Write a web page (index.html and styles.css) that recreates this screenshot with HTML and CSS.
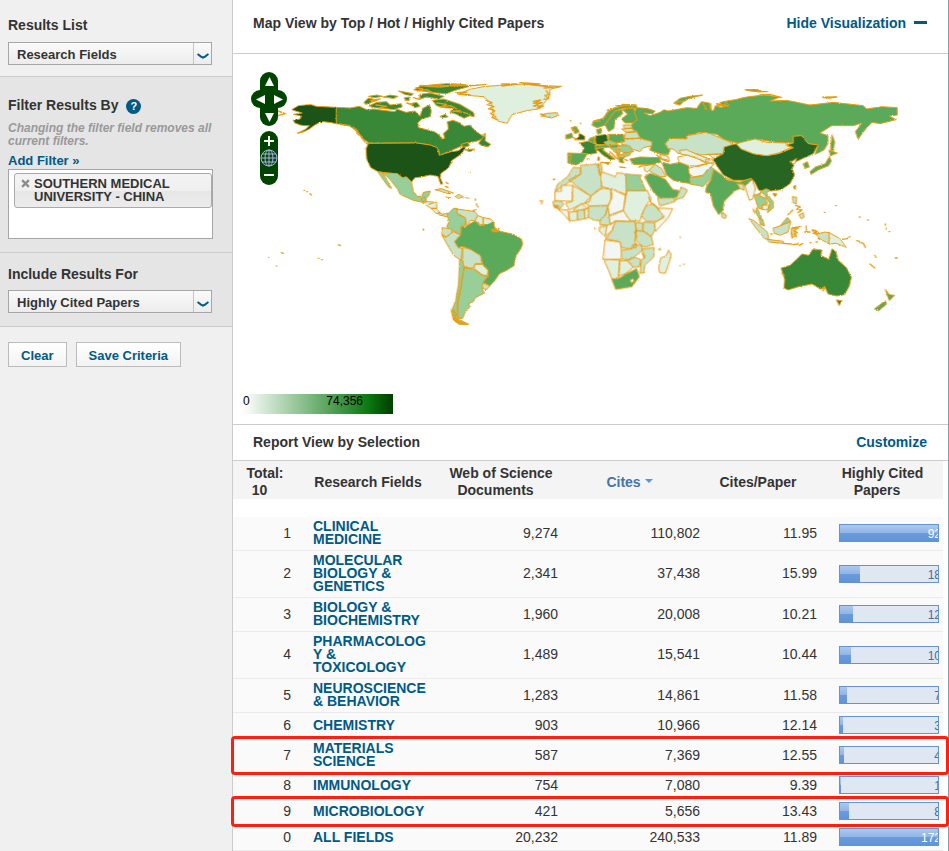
FILE: index.html
```html
<!DOCTYPE html>
<html lang="en">
<head>
<meta charset="utf-8">
<title>Research Fields</title>
<link rel="stylesheet" href="styles.css">
</head>
<body>
<div class="layout">
<aside class="sidebar">
  <section class="panel panel-results">
    <label class="panel-title" for="results-list">Results List</label>
    <div class="select-wrap">
      <select id="results-list"><option>Research Fields</option></select>
      <span class="select-arrow"><svg viewBox="0 0 12 6"><path d="M0.5 1 L4 3.6 L6 4.6 L8 3.6 L11.5 1"/></svg></span>
    </div>
  </section>
  <section class="panel panel-filter">
    <h2 class="panel-title with-help">Filter Results By <button class="help" type="button" aria-label="Help">?</button></h2>
    <p class="note">Changing the filter field removes all current filters.</p>
    <a class="add-filter" href="#">Add Filter »</a>
    <div class="filter-box">
      <div class="chip">
        <button class="chip-remove" type="button" aria-label="Remove"><svg viewBox="0 0 8 8"><path d="M1 1 L7 7 M7 1 L1 7"/></svg></button>
        <span>SOUTHERN MEDICAL UNIVERSITY - CHINA</span>
      </div>
    </div>
  </section>
  <section class="panel panel-include">
    <label class="panel-title" for="include-for">Include Results For</label>
    <div class="select-wrap">
      <select id="include-for"><option>Highly Cited Papers</option></select>
      <span class="select-arrow"><svg viewBox="0 0 12 6"><path d="M0.5 1 L4 3.6 L6 4.6 L8 3.6 L11.5 1"/></svg></span>
    </div>
  </section>
  <div class="actions">
    <button class="btn" type="button">Clear</button>
    <button class="btn" type="button">Save Criteria</button>
  </div>
</aside>

<main class="main">
  <header class="bar-head map-head">
    <h2>Map View by Top / Hot / Highly Cited Papers</h2>
    <a class="hide-link" href="#">Hide Visualization<span class="dash"></span></a>
  </header>
  <section class="map">
    <svg class="world" viewBox="0 0 2145 1110" aria-hidden="true">
      <defs>
        <filter id="coast" x="0" y="0" width="100%" height="100%">
          <feTurbulence type="fractalNoise" baseFrequency="0.22" numOctaves="2" seed="4" result="n"/>
          <feDisplacementMap in="SourceGraphic" in2="n" scale="6" xChannelSelector="R" yChannelSelector="G"/>
        </filter>
      </defs>
      <g filter="url(#coast)">
      <g transform="translate(21 3)">
        <path class="c6" d="M157,163 L175,152 195,150 214,149 228,154 290,157 290,207 275,203 250,200 237,203 220,213 208,222 190,231 172,235 198,222 208,212 192,212 180,210 163,203 160,195 180,192 184,183 160,178 186,174 160,166Z"/>
        <path class="c4" d="M290,157 L330,159 358,154 380,164 400,162 430,166 465,170 470,162 498,172 525,168 540,184 548,160 568,150 574,168 570,185 545,192 533,204 536,218 560,224 583,230 598,240 606,252 614,250 610,236 625,222 622,200 640,196 660,204 672,214 690,210 706,228 724,240 736,248 712,258 682,264 660,275 640,284 600,301 594,280 570,270 530,264 386,264 370,252 350,228 330,214 308,208 290,206Z"/>
        <path class="c4" d="M372,142 L384,130 400,132 396,142 378,148Z M388,152 L410,142 440,140 450,150 484,146 486,156 462,164 430,160 400,158Z M386,124 L410,120 428,124 404,128Z M430,126 L450,120 474,124 462,130Z M476,108 L498,112 520,116 514,122 494,118Z M494,128 L510,126 508,136 496,136Z M522,104 L540,94 572,90 620,86 670,88 690,94 660,102 640,108 620,116 590,114 560,110Z M540,118 L570,114 612,124 596,132 560,126 540,132Z M578,136 L610,132 636,140 660,148 680,160 700,172 704,186 690,182 672,190 650,178 630,172 640,160 612,158 590,152Z M512,146 L530,142 540,154 524,158Z M600,184 L616,178 624,186 608,188Z M716,264 L736,238 736,258 752,268 744,276 722,270Z M664,268 L684,262 688,272 670,278Z M676,284 L704,282 690,290Z"/>
        <path class="coast" d="M528,98 L548,102 532,108 560,104 576,112 M560,94 L600,96 640,92 700,92 740,88 M392,136 L420,132 400,140 M408,150 L440,154 420,158 M590,144 L620,148 600,156 632,152 650,162 M640,168 L670,172 690,178 M500,144 L518,150 M520,128 L540,134 M340,216 L356,240 348,222 366,250 376,262 390,272 M300,208 L330,212 M636,302 L626,318 636,322 624,330 M174,234 L190,228 M638,170 L660,166 M728,240 L736,236 M114,168 L136,176 114,182"/>
        <path class="c6" d="M386,265 L530,264 570,270 592,278 598,301 632,290 655,287 672,274 676,280 660,300 636,316 626,338 602,356 601,370 608,386 602,388 594,364 570,360 545,366 525,368 514,382 500,366 486,368 472,356 440,354 414,350 392,338 380,312 378,282Z"/>
        <path class="c2" d="M428,353 L440,354 472,356 486,368 500,366 514,380 520,410 532,424 545,424 550,412 571,408 566,422 556,432 548,442 520,436 480,418 474,404 452,376 440,364Z M414,350 L428,353 440,375 455,400 446,396 430,375Z M544,430 L556,426 560,440 548,442Z"/>
        <path class="c0" d="M548,442 L566,440 590,442 590,460 574,460Z M574,460 L590,460 600,474 590,476Z M566,448 L580,444"/>
        <path class="c1" d="M596,472 L608,478 622,474 622,486 608,482 598,480Z M586,404 L605,401 640,414 622,416 600,408Z M646,424 L656,418 670,426 656,430Z M618,426 L632,428 M676,428 L688,430"/>
        <path class="c2" d="M622,478 L640,460 652,460 652,478 676,488 676,512 664,514 662,540 640,528 620,516 626,500Z"/>
        <path class="c1" d="M650,462 L680,466 705,470 714,482 706,498 692,496 680,514 676,488 654,476Z M608,518 L634,522 636,532 618,546 606,538Z M606,540 L618,548 640,530 662,540 644,560 655,578 668,580 668,610 662,616 640,600 620,566Z M668,578 L690,580 722,602 726,626 706,626 698,640 672,636 664,612Z M728,684 L750,692 740,704 726,700Z"/>
        <path class="c0" d="M714,482 L730,488 730,510 720,508 706,498Z M730,488 L752,492 764,504 745,508 730,510Z"/>
        <path class="c3" d="M664,514 L676,516 692,505 706,498 720,512 745,508 760,500 766,524 785,530 820,538 844,552 848,566 842,582 828,602 822,632 800,646 778,656 765,676 750,692 728,682 745,662 742,642 728,628 722,602 695,585 668,574 655,578 644,560 662,540Z"/>
        <path class="coast" d="M754,524 L776,520 774,530 758,530Z M760,526 L774,526"/>
        <path class="c0" d="M706,628 L726,628 744,646 742,662 728,660 704,642Z"/>
        <path class="c2" d="M672,638 L700,642 728,662 742,664 728,684 726,702 734,714 706,728 700,740 686,746 690,756 676,770 668,790 654,790 652,740 662,700 668,660Z M660,614 L668,616 672,640 664,690 654,740 652,790 686,808 660,810 640,795 634,768 646,740 655,690Z"/>
        <path class="coast" d="M640,766 L650,780 640,784 656,798 648,800 676,808 M636,770 L644,796 670,804 M686,240"/>
        <path class="dots" d="M192,406h2 M200,410h2 M210,416l4,4 M550,522v4 M296,569l5,3 M124,593l6,2 M85,607h1 M109,633h1 M235,610h2 M245,614h2 M688,352h2 M618,382l6,4 M616,394l8,4 M706,432v4 M710,446v6 M714,454v2 M700,466l8,-2"/>
      </g>
      <g transform="translate(561 48)">
        <path class="c0" d="M115,72 L150,58 190,50 240,46 310,42 360,46 425,49 390,58 388,80 372,100 360,116 320,122 276,134 262,160 236,154 222,136 214,100 190,80 140,76Z"/>
        <path class="coast" d="M110,68 L140,66 118,72 150,74 M246,48 L290,42 244,42 M300,38 L360,42 310,42 M330,44 L400,52 372,54 420,50 M378,62 L388,74 374,76 386,86 372,88 M340,94 L362,90 340,100 366,98 340,108 370,108 352,114 M198,92 L216,98 202,104 222,110 206,116 224,122 212,130 226,140 216,142 232,150 M0,46 L20,48 160,46 M90,42 L150,48"/>
        <path class="c1" d="M366,134 L380,130 410,128 416,136 395,144 374,140Z"/>
        <path class="coast" d="M362,132 L376,136 364,138"/>
      </g>
      <g transform="translate(921 63)">
        <path class="c3" d="M156,150 L160,138 190,130 204,110 225,98 250,92 290,92 290,100 250,100 225,108 210,128 196,150 172,158Z M210,128 L225,108 245,104 248,116 225,134 222,160 206,170 195,150Z M248,104 L280,96 292,134 282,144 255,144 244,132 262,118Z"/>
        <path class="coast" d="M160,140 L180,138 M188,132 L202,112 212,104 M200,106 L240,94 230,92 270,92 M246,88 L288,90"/>
        <path class="c3" d="M288,98 L320,100 345,108 338,116 312,114 330,122 360,112 372,104 384,108 440,98 470,100 484,80 508,84 512,104 520,108 526,92 548,98 540,82 585,74 620,66 670,60 690,62 720,66 690,78 740,76 810,90 880,82 970,92 980,102 1025,95 1072,98 1072,120 1048,123 1068,134 1020,146 996,142 980,158 954,192 946,170 966,144 940,152 875,152 840,174 864,182 864,205 852,225 825,238 834,210 805,206 785,182 760,184 760,204 710,202 645,192 600,206 555,195 530,178 480,172 442,182 440,192 388,192 376,206 390,226 384,240 360,236 330,226 335,200 300,190 290,170 275,160 275,148 292,134 284,116Z"/>
        <path class="c3" d="M402,84 L420,70 450,64 488,60 450,70 430,80 420,90Z M620,46 L650,44 668,50 646,50Z M848,66 L888,66 868,70Z M876,180 L884,200 880,228 872,226Z"/>
        <path class="coast" d="M404,82 L430,78 M616,44 L654,44 M652,50 L682,50 M530,90 L546,92 532,86 564,94 M560,80 L550,94 566,90 M850,68 L890,66 M660,60 L690,58 724,68 M488,84 L500,104 M512,86 L514,104"/>
        <path class="c1" d="M376,206 L388,190 440,192 442,182 498,172 530,184 558,196 580,206 560,222 550,236 510,238 480,240 440,228 415,236 400,222 386,222Z M252,192 L280,190 300,190 335,200 336,212 310,218 300,230 276,222 268,212 245,208Z M258,172 L290,170 300,188 280,192 254,190Z M250,150 L275,150 276,160 254,160Z M246,162 L276,160 284,172 260,172Z M320,272 L345,268 364,280 378,304 360,306 332,290Z"/>
        <path class="c3" d="M206,178 L250,178 254,200 230,204 206,196Z M84,234 L142,236 128,260 108,270 84,264Z M270,252 L300,246 360,248 362,262 330,270 280,268Z M366,262 L390,268 420,262 446,274 452,304 456,326 425,322 400,316 380,300Z M94,158 L108,154 118,170 106,176Z M78,180 L96,174 98,188 78,192Z M170,164 L184,160 184,174 174,178Z M234,250 L256,244 248,254 252,264 240,262Z"/>
        <path class="c5" d="M168,182 L200,178 204,196 196,210 170,208 164,196Z M104,194 L116,186 118,174 134,184 134,194Z"/>
        <path class="c4" d="M118,204 L146,198 168,208 170,234 150,238 124,234 132,220Z M166,222 L190,216 192,228 216,244 226,252 210,254 188,240 176,228Z M196,264 L210,262 206,268Z M174,246 L178,246 178,256 174,256Z"/>
        <path class="c3" d="M150,190 L166,184 166,206 146,198Z M166,212 L216,208 212,216 168,220Z M206,210 L226,206 240,214 216,222Z"/>
        <path class="c2" d="M192,202 L206,196 232,206 226,210 200,210Z M240,212 L268,212 280,230 254,234 238,226Z M212,218 L238,220 240,236 226,232Z M250,234 L274,232 268,242 252,244Z M230,236 L250,240 236,252Z M450,308 L490,302 510,272 524,285 514,310 490,334 452,328Z"/>
        <path class="coast" d="M84,240 L92,240 90,264 M226,224 L240,250 M210,230 L230,250 M160,204 L166,186 150,190 M182,262 L210,264 M240,276 L256,278 M296,276 L308,272 M254,254 L262,256 M98,162 L106,168 M100,188 L110,192 M188,224 L220,250 M350,240 L368,254 386,260 M362,242 L384,250"/>
        <path class="c0" d="M360,238 L384,244 388,256 366,252Z M420,226 L440,224 470,238 510,252 500,262 470,250 440,240 424,238Z M505,238 L550,238 524,250Z M498,252 L522,252 522,264 500,264Z M314,272 L345,268 322,292 314,286Z M530,300 L576,316 578,322 546,314Z"/>
        <path class="cw" d="M414,246 L440,240 470,250 500,266 478,274 446,272 418,262Z M446,280 L480,270 510,264 522,268 500,286 490,300 460,306 448,296Z"/>
        <path class="dots" d="M92,136v2 M122,144v2 M142,252h4 M42,313h2"/>
      </g>
      <g transform="translate(921 318)">
        <path class="c3" d="M314,50 L330,40 350,46 376,58 398,88 418,92 412,110 385,120 356,112 340,96Z M522,28 L548,46 560,60 600,66 625,56 640,54 640,70 620,80 606,74 600,86 585,92 552,124 548,152 536,164 520,138 512,102 496,96 500,78 512,60Z"/>
        <path class="c1" d="M420,92 L424,80 442,92 430,112 405,120 412,108Z M354,114 L400,114 406,124 360,138Z M546,158 L560,166 556,176 546,172Z M84,48 L100,22 122,24 122,42 82,70 46,94 52,74Z M122,16 L176,12 182,48 186,80 152,108 86,60 122,42Z M172,14 L184,12 186,34 180,44Z M40,124 L60,122 72,132 60,146 42,140Z M112,150 L134,150 136,176 114,180Z M146,138 L204,138 196,165 178,182 160,180 144,170Z M204,142 L210,166 212,196 180,194 180,182 196,165Z M226,184 L284,184 290,210 284,240 290,262 262,266 244,262 240,246 196,236 216,214Z M318,138 L340,130 358,150 380,164 350,184 320,184 304,170Z M312,186 L344,188 344,212 334,230 310,212Z M288,188 L308,188 308,212 288,212Z M288,212 L310,214 334,230 340,254 312,262 290,244Z M244,270 L278,266 286,252 306,258 306,272 284,290 262,300 244,296Z M306,268 L342,262 342,290 314,316 312,338 300,340 304,300 314,290Z M264,300 L284,292 302,298 298,320 280,322Z"/>
        <path class="c0" d="M186,36 L210,44 226,50 232,38 258,42 260,104 216,88 186,80 182,50Z M260,92 L322,92 334,118 322,130 306,160 300,184 260,180 250,150 256,118Z M134,128 L156,106 186,84 212,88 212,120 204,136 150,138Z M98,76 L152,108 150,124 120,134 88,150 76,130 96,124Z M88,156 L112,154 112,180 90,184Z M100,150 L126,130 142,146 110,152Z M134,150 L146,142 144,174 136,176Z M180,200 L200,198 206,212 192,226 178,214Z M192,298 L240,300 236,354 216,358 206,332Z M240,302 L262,302 280,322 258,340 236,348Z M356,324 L362,294 378,288 386,270 394,288 376,340 360,338Z"/>
        <path class="cw" d="M46,94 L64,94 64,76 98,76 96,124 46,122Z M214,86 L256,106 250,150 208,166 204,140 216,112Z M208,168 L250,152 272,184 226,182 212,194Z M354,144 L398,146 384,174 346,214 344,188 372,172Z M196,240 L240,246 244,268 244,298 190,298Z M56,148 L84,150 88,182 76,168Z M202,196 L226,184 216,210 196,230Z"/>
        <path class="c2" d="M258,42 L305,46 300,52 318,92 260,92Z"/>
        <path class="c3" d="M216,358 L236,356 258,342 290,326 298,350 276,380 228,388Z"/>
        <path class="cw" d="M270,362 L278,356 284,362 276,368Z"/>
        <path class="coast" d="M42,136 L56,138 44,142 58,146 M276,258 L290,252 M306,280 L314,294 M350,140 L356,150 M326,112 L334,130 350,140 M284,216 L290,230 M322,44 L314,52"/>
        <path class="dots" d="M0,122l8,2 M4,130h2 M165,204v3 M356,268h6 M420,232h1 M420,317h1 M431,313h1 M40,58h2 M550,160h1"/>
      </g>
      <g transform="translate(1401 63)">
        <path class="c5" d="M40,252 L70,236 72,216 108,206 124,222 160,236 200,242 236,236 280,218 258,210 280,204 280,184 305,182 325,206 354,210 340,236 310,250 284,262 270,258 282,272 276,280 284,300 270,326 244,344 214,348 176,346 164,322 154,310 132,316 100,316 70,300 50,272Z M220,358 L230,356 226,364Z"/>
        <path class="c0" d="M110,206 L124,202 165,192 200,202 262,204 258,212 276,216 236,234 200,242 160,236 124,222Z"/>
        <path class="c3" d="M310,266 L322,260 328,276 316,280Z M330,290 L346,276 376,266 388,244 394,258 386,272 356,284 334,298Z M388,226 L412,234 392,242Z M280,335 L287,330 286,344Z"/>
        <path class="cw" d="M136,332 L156,314 166,340 164,350 158,372 148,376 140,352Z M272,262 L290,250 284,266Z"/>
        <path class="c1" d="M112,326 L130,328 132,346 120,340Z"/>
      </g>
      <g transform="translate(1491 378)">
        <path class="c2" d="M72,46 L90,40 108,56 112,70 98,76 98,88 84,84 80,70Z M80,84 L76,96 90,120 94,112Z M88,114 L98,118 104,138 92,134Z M92,34 L108,26 118,30 110,40 130,66 130,84 112,98 120,72 104,42Z M150,138 L172,112 182,124 164,132Z"/>
        <path class="c1" d="M58,116 L72,122 112,156 116,178 104,176 76,142Z M112,178 L160,184 160,190 118,186Z M130,144 L150,138 164,132 182,126 174,156 150,166 134,160Z M248,152 L256,150 262,162 284,156 298,158 298,192 272,178Z M188,50 L200,52 198,72 190,68Z M208,104 L220,98 222,112 214,116Z M184,146 L206,144 192,152 198,166 188,172Z"/>
        <path class="c0" d="M298,158 L330,176 348,202 318,190 298,192Z M98,76 L118,74 112,90 98,88Z M92,36 L106,44 108,56 90,48Z"/>
        <path class="coast" d="M186,144 L210,140 M190,150 L202,158 192,162 200,170 M184,156 L186,174 M160,190 L184,192 M188,194 L204,192 M208,196 L218,190 M228,138 L230,154 M224,156 L240,156 M246,150 L262,154 250,160 262,162 M336,178 L352,176 358,170 M196,76 L210,80 200,88 216,90 204,98 M174,104 L188,90 M122,162 L126,162 M380,182 L388,184 M392,188 L400,190 406,202 M434,226 L438,232 M420,252 L434,264 M496,234 L502,234 M240,188h4 M258,186h4 M264,176h4 M130,40 L138,44 M70,86 L72,96"/>
        <path class="c4" d="M154,264 L180,256 200,238 216,222 236,226 248,208 276,210 272,226 296,238 306,206 318,216 324,240 350,264 364,292 358,318 344,344 320,348 294,342 284,320 272,328 246,312 206,320 174,330 162,324 164,300Z M320,360 L336,362 328,376Z"/>
        <path class="coast" d="M276,326 L284,320 280,332 M156,280 L162,286 M252,206 L258,210"/>
        <path class="c3" d="M466,328 L478,344 494,346 478,362 474,352Z M434,386 L466,362 470,372 446,392Z"/>
        <path class="dots" d="M317,77h2 M283,97h2 M388,111h2 M413,120h2 M466,132v4 M468,144v3 M477,155h2"/>
      </g>
      </g>
    </svg>
    <div class="map-controls">
      <div class="pan">
        <button class="up" type="button" aria-label="Pan up"><svg viewBox="0 0 10 10"><path d="M5 0 L10 10 H0Z"/></svg></button>
        <button class="left" type="button" aria-label="Pan left"><svg viewBox="0 0 10 10"><path d="M0 5 L10 0 V10Z"/></svg></button>
        <button class="right" type="button" aria-label="Pan right"><svg viewBox="0 0 10 10"><path d="M10 5 L0 0 V10Z"/></svg></button>
        <button class="down" type="button" aria-label="Pan down"><svg viewBox="0 0 10 10"><path d="M5 10 L10 0 H0Z"/></svg></button>
      </div>
      <div class="zoom">
        <button type="button" aria-label="Zoom in"><svg viewBox="0 0 18 18"><path d="M4 9h10v2H4z M8 5h2v10H8z"/></svg></button>
        <button type="button" aria-label="Whole world"><svg class="globe" viewBox="0 0 18 18"><circle cx="9" cy="9" r="8"/><ellipse cx="9" cy="9" rx="4" ry="8"/><path d="M1 9H17 M2 5H16 M2 13H16 M9 1V17"/></svg></button>
        <button type="button" aria-label="Zoom out"><svg viewBox="0 0 18 18"><path d="M4 7h10v2H4z"/></svg></button>
      </div>
    </div>
    <div class="legend"><span>0</span><span>74,356</span></div>
  </section>
  <header class="bar-head report-head">
    <h2>Report View by Selection</h2>
    <a href="#">Customize</a>
  </header>
  <div class="table-wrap">
  <table>
    <colgroup><col class="k1"><col class="k2"><col class="k3"><col class="k4"><col class="k5"><col class="k6"></colgroup>
    <thead>
      <tr>
        <th>Total:<br>10<i class="slot"></i></th>
        <th>Research Fields</th>
        <th>Web of Science<br>Documents<i class="slot"></i></th>
        <th class="sorted">Cites<i class="slot arrow"></i></th>
        <th>Cites/Paper<i class="slot"></i></th>
        <th>Highly Cited<br>Papers<i class="slot"></i></th>
      </tr>
    </thead>
    <tbody>
      <tr class="spacer"><td colspan="6"></td></tr>
      <tr><td>1</td><td><a href="#">CLINICAL MEDICINE</a></td><td>9,274</td><td>110,802</td><td>11.95</td><td><div class="meter full"><span class="fill" style="width:100%"></span><span class="val">92</span></div></td></tr>
      <tr><td>2</td><td><a href="#">MOLECULAR BIOLOGY &amp; GENETICS</a></td><td>2,341</td><td>37,438</td><td>15.99</td><td><div class="meter"><span class="fill" style="width:20%"></span><span class="val">18</span></div></td></tr>
      <tr><td>3</td><td><a href="#">BIOLOGY &amp; BIOCHEMISTRY</a></td><td>1,960</td><td>20,008</td><td>10.21</td><td><div class="meter"><span class="fill" style="width:13%"></span><span class="val">12</span></div></td></tr>
      <tr><td>4</td><td><a href="#">PHARMACOLOGY &amp; TOXICOLOGY</a></td><td>1,489</td><td>15,541</td><td>10.44</td><td><div class="meter"><span class="fill" style="width:11%"></span><span class="val">10</span></div></td></tr>
      <tr><td>5</td><td><a href="#">NEUROSCIENCE &amp; BEHAVIOR</a></td><td>1,283</td><td>14,861</td><td>11.58</td><td><div class="meter"><span class="fill" style="width:7%"></span><span class="val">7</span></div></td></tr>
      <tr><td>6</td><td><a href="#">CHEMISTRY</a></td><td>903</td><td>10,966</td><td>12.14</td><td><div class="meter"><span class="fill" style="width:3%"></span><span class="val">3</span></div></td></tr>
      <tr class="marked"><td>7</td><td><a href="#">MATERIALS SCIENCE</a></td><td>587</td><td>7,369</td><td>12.55</td><td><div class="meter"><span class="fill" style="width:4%"></span><span class="val">4</span></div></td></tr>
      <tr><td>8</td><td><a href="#">IMMUNOLOGY</a></td><td>754</td><td>7,080</td><td>9.39</td><td><div class="meter"><span class="fill" style="width:1%"></span><span class="val">1</span></div></td></tr>
      <tr class="marked"><td>9</td><td><a href="#">MICROBIOLOGY</a></td><td>421</td><td>5,656</td><td>13.43</td><td><div class="meter"><span class="fill" style="width:9%"></span><span class="val">8</span></div></td></tr>
      <tr><td>0</td><td><a href="#">ALL FIELDS</a></td><td>20,232</td><td>240,533</td><td>11.89</td><td><div class="meter full"><span class="fill" style="width:100%"></span><span class="val">172</span></div></td></tr>
    </tbody>
  </table>
  </div>
</main>
</div>
</body>
</html>
```
FILE: styles.css
```css
* { box-sizing: border-box; }
body { margin: 0; font-family: "Liberation Sans", Arial, sans-serif; font-size: 14px; line-height: 18px; color: #333; background: #fff; }
h2, p { margin: 0; font-size: 14px; }
a { color: #005a84; font-weight: bold; text-decoration: none; }
button { font-family: inherit; cursor: pointer; }

.layout { display: flex; min-height: 100vh; }
.sidebar { flex: 0 0 233px; background: #f0f0f0; border-right: 1px solid #ccc; }
.panel { padding: 0 19px 0 8px; border-bottom: 1px solid #ccc; }
.panel-title { display: block; font-weight: bold; line-height: 18px; }
.with-help { display: flex; align-items: center; gap: 8px; }
.panel-results { padding-top: 16px; padding-bottom: 11px; }
.panel-filter { padding-top: 19px; padding-bottom: 13px; background: #e5e5e5; }
.panel-include { padding-top: 12px; padding-bottom: 13px; background: #e5e5e5; }

.select-wrap { position: relative; width: 204px; height: 23px; margin-top: 8px; }
.panel-include .select-wrap { margin-top: 7px; }
.select-wrap select { appearance: none; width: 100%; height: 100%; padding: 1px 24px 0 8px; border: 1px solid #a6a6a6; border-radius: 0; background: linear-gradient(#fafafa, #ececec); font: bold 13px "Liberation Sans", Arial, sans-serif; color: #333; }
.select-arrow { position: absolute; top: 1px; right: 1px; bottom: 1px; width: 18px; border-left: 1px solid #c4c4c4; display: flex; align-items: center; justify-content: center; padding-top: 5px; pointer-events: none; }
.select-arrow svg { width: 12px; height: 6px; fill: none; stroke: #005a84; stroke-width: 2; }

.help { width: 15px; height: 15px; margin-top: 2px; padding: 0; border: 0; border-radius: 50%; background: #005a84; color: #fff; font-size: 11px; font-weight: bold; line-height: 15px; }
.note { margin-top: 8px; margin-right: -8px; font-size: 12px; line-height: 13px; font-weight: bold; font-style: italic; color: #999; }
.add-filter { display: block; margin-top: 4px; font-size: 13px; line-height: 17px; }
.filter-box { width: 205px; height: 70px; padding: 3px 0 0 5px; border: 1px solid #a6a6a6; background: #fff; }
.chip { display: flex; align-items: flex-start; gap: 4px; height: 35px; padding: 3px 10px 0 6px; border: 1px solid #aaa; border-radius: 3px; background: linear-gradient(#f4f4f4, #efefef 50%, #e6e6e6 50%, #ececec); font-size: 13px; font-weight: bold; line-height: 13px; }
.chip-remove { flex: 0 0 9px; height: 9px; margin-top: 2px; padding: 0; border: 0; background: none; }
.chip-remove svg { display: block; width: 9px; height: 9px; fill: none; stroke: #8c8c8c; stroke-width: 2; }

.actions { display: flex; gap: 9px; padding: 15px 8px; }
.btn { height: 25px; padding: 1px 12px 0; border: 1px solid #bbb; background: linear-gradient(#fff, #f3f3f3); color: #005a84; font-size: 13px; font-weight: bold; }

.main { flex: 1; min-width: 0; border-right: 1px solid #8799a5; }
.bar-head { display: flex; justify-content: space-between; align-items: center; padding: 0 21px 0 20px; border-bottom: 1px solid #ccc; }
.map-head { height: 54px; padding-bottom: 8px; }
.report-head { height: 37px; padding-bottom: 2px; border-top: 1px solid #ccc; }
.hide-link { display: flex; align-items: center; gap: 8px; }
.dash { width: 13px; height: 3px; background: #005a84; }

.map { position: relative; }
.world { display: block; width: 100%; height: auto; }
.world path { stroke: #ea9c10; stroke-width: 3; stroke-linejoin: round; stroke-linecap: round; }
.cw { fill: #f3f7f3; }
.c0 { fill: #dff0df; }
.c1 { fill: #c8e2c8; }
.c2 { fill: #98ce98; }
.c3 { fill: #5aaa5a; }
.c4 { fill: #388837; }
.c5 { fill: #256623; }
.c6 { fill: #1a5218; }
.coast, .dots { fill: none; }
.world .coast, .world .dots { stroke-width: 4; }

.map-controls { position: absolute; top: 18px; left: 18px; display: flex; flex-direction: column; align-items: center; gap: 5px; }
.map-controls button { position: relative; display: flex; align-items: center; justify-content: center; padding: 0; border: 0; background: none; }
.map-controls svg { fill: #fff; }
.pan { position: relative; display: grid; grid-template-columns: 18px 18px; grid-template-rows: repeat(3, 18px); }
.pan::before, .pan::after { content: ""; position: absolute; background: #004400; border-radius: 9px; }
.pan::before { inset: 0 9px; }
.pan::after { inset: 18px 0; }
.pan button { z-index: 1; }
.pan svg { width: 9px; height: 9px; }
.up, .down { grid-column: 1 / 3; }
.zoom { width: 18px; border-radius: 9px; background: #004400; }
.zoom button { width: 18px; height: 18px; }
.zoom svg { width: 18px; height: 18px; }
.zoom .globe { fill: none; stroke: #aab0ee; stroke-width: 1; }

.legend { position: absolute; left: 10px; bottom: 10px; display: flex; justify-content: space-between; width: 150px; height: 20px; padding-right: 30px; background: linear-gradient(90deg, #fff, #0a780f 84%, #004400 98%); color: #000; font-size: 12px; line-height: 14px; }

.table-wrap { padding-right: 5px; }
table { width: 100%; table-layout: fixed; border-collapse: separate; border-spacing: 0; }
.k1 { width: 64px; }
.k2 { width: 142px; }
.k3 { width: 124px; }
.k4 { width: 142px; }
.k5 { width: 117px; }
.k6 { width: 121px; }
th { height: 38px; padding: 4px 0 0; background: #f4f4f4; font-size: 14px; line-height: 17px; text-align: center; }
.sorted { padding-right: 10px; color: #4675a3; }
.slot { display: inline-block; width: 11px; height: 8px; }
.arrow::before { content: ""; display: block; width: 0; margin-left: 4px; border: 4px solid transparent; border-top-color: #5b93d6; border-bottom: 0; }
td { padding: 3px 5px 4px 0; border-bottom: 1px solid #ebebeb; background: #fafafa; line-height: 13px; text-align: right; }
td:nth-child(1) { padding-right: 6px; }
td:nth-child(2) { padding-left: 16px; padding-right: 10px; text-align: left; overflow-wrap: anywhere; }
td:nth-child(6) { padding-left: 17px; padding-right: 4px; }
.spacer td { height: 18px; padding: 0; border: 0; background: #fff; }

.meter { position: relative; display: flex; justify-content: flex-end; height: 18px; border: 1px solid #6494d0; background: #dfe7f3; overflow: hidden; font-size: 12px; line-height: 19px; color: #4a6c99; }
.fill { position: absolute; top: 0; bottom: 0; left: 0; background: linear-gradient(#adc8ee, #8fb4e6 50%, #6a9cdc 50%, #5f94da); }
.val { position: relative; margin-right: -3px; }
.full .val { color: #fff; }

.marked { position: relative; }
.marked::after { content: ""; position: absolute; inset: -3px -6px -2px -2px; border: 3px solid #fd2010; border-radius: 4px; }
```
